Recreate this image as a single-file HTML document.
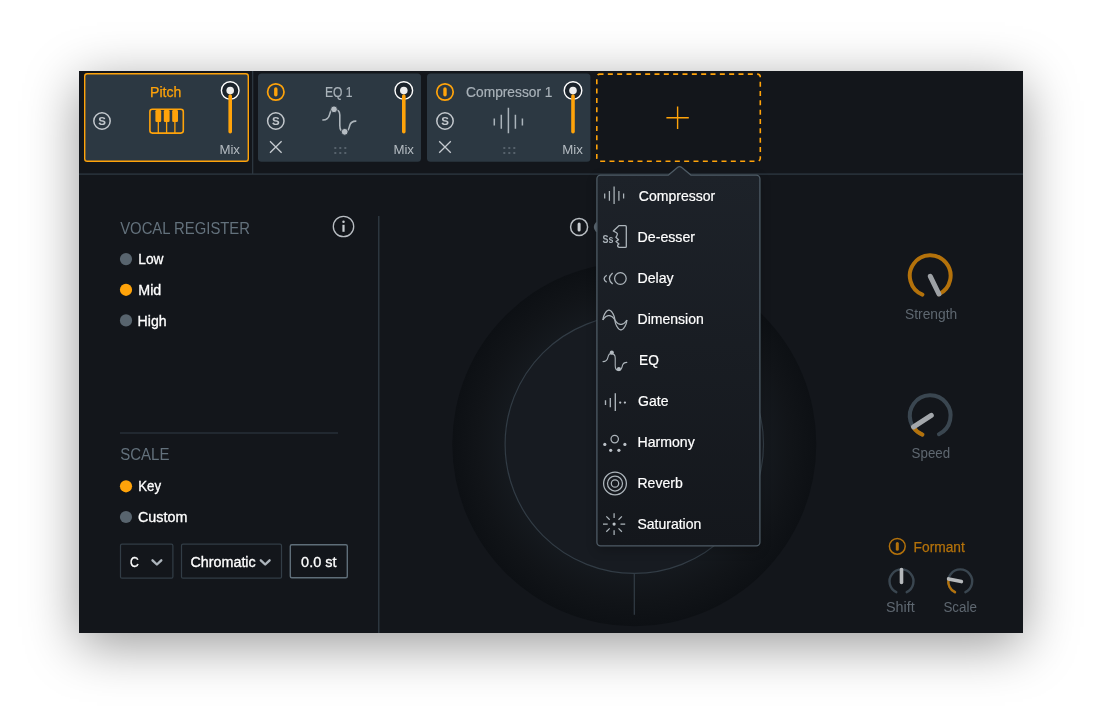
<!DOCTYPE html>
<html lang="en">
<head>
<meta charset="utf-8">
<title>Pitch module – add effect menu</title>
<style>
  html, body { margin: 0; padding: 0; background: #ffffff; }
  body { width: 1104px; height: 710px; overflow: hidden; position: relative;
         font-family: "Liberation Sans", sans-serif; }
  #win { position: absolute; left: 79px; top: 71px; width: 944px; height: 562px;
         background: #13161b;
         box-shadow: 0 12px 50px rgba(0,0,0,0.40), 0 0 0 0.6px rgba(255,255,255,0.55); }
  svg#ui { position: absolute; left: 0; top: 0; width: 1104px; height: 710px; will-change: transform; }
  svg text { font-family: "Liberation Sans", sans-serif; }
</style>
</head>
<body>
<div id="win"></div>
<svg id="ui" width="1104" height="710" viewBox="0 0 1104 710">
  <defs>
    <radialGradient id="gOuter" cx="634.3" cy="444.2" r="182" gradientUnits="userSpaceOnUse">
      <stop offset="0" stop-color="#15191e"/>
      <stop offset="0.71" stop-color="#15191e"/>
      <stop offset="0.86" stop-color="#111418"/>
      <stop offset="1" stop-color="#0d1014"/>
    </radialGradient>
    <linearGradient id="gPop" x1="0" y1="175" x2="0" y2="546" gradientUnits="userSpaceOnUse">
      <stop offset="0" stop-color="#1d2229"/>
      <stop offset="1" stop-color="#14171c"/>
    </linearGradient>
    <filter id="fBlur" x="-20%" y="-20%" width="140%" height="140%"><feGaussianBlur stdDeviation="6"/></filter>
    <clipPath id="clipWin"><rect x="79" y="71" width="944" height="562"/></clipPath>
  </defs>

  <!-- ===== separators ===== -->
  <g id="separators" fill="#2c363f">
    <rect x="79" y="173.4" width="944" height="1.4"/>
    <rect x="252" y="71" width="1.3" height="103"/>
    <rect x="378" y="216" width="1.5" height="417"/>
    <rect x="120" y="432.4" width="218" height="1.2"/>
  </g>

  <!-- ===== big dial ===== -->
  <g id="dial" clip-path="url(#clipWin)">
    <circle cx="634.3" cy="444.2" r="182" fill="url(#gOuter)"/>
    <circle cx="634.3" cy="444.2" r="129.2" fill="#171b21" stroke="#323c45" stroke-width="1.2"/>
    <rect x="633.7" y="573.6" width="1.2" height="41.2" fill="#323c45"/>
  </g>

  <!-- ===== module: Pitch ===== -->
  <g id="mod-pitch">
    <rect x="84.7" y="73.7" width="163.6" height="87.6" rx="2.6" fill="#2c3842" stroke="#ffa30a" stroke-width="1.4"/>
    <text x="150.1" y="97.3" font-size="14" fill="#ffa30a" stroke="#ffa30a" stroke-width="0.25" textLength="31.3" lengthAdjust="spacingAndGlyphs">Pitch</text>
    <!-- solo -->
    <circle cx="102" cy="121" r="8.2" fill="none" stroke="#c3c8cd" stroke-width="1.5"/>
    <text x="102" y="125.1" font-size="11.5" font-weight="bold" fill="#c3c8cd" text-anchor="middle">S</text>
    <!-- piano -->
    <g stroke="#ffa30a" fill="none" stroke-width="1.6">
      <rect x="149.9" y="109.3" width="33.4" height="23.8" rx="2.5"/>
      <path d="M158.3 120v13M166.6 120v13M174.9 120v13" stroke-width="1.3"/>
    </g>
    <g fill="#ffa30a">
      <rect x="155.4" y="110" width="5.8" height="12" rx="1.2"/>
      <rect x="163.8" y="110" width="5.8" height="12" rx="1.2"/>
      <rect x="172.2" y="110" width="5.8" height="12" rx="1.2"/>
    </g>
    <!-- mix slider -->
    <circle cx="230.2" cy="90.5" r="8.8" fill="#1b232b" stroke="#ffffff" stroke-width="1.4"/>
    <path d="M230.2 96V131.8" stroke="#ffa30a" stroke-width="3.6" stroke-linecap="round"/>
    <circle cx="230.2" cy="90.5" r="3.8" fill="#ececec"/>
    <text x="219.4" y="153.6" font-size="13" fill="#b4bbc1" textLength="20.6" lengthAdjust="spacingAndGlyphs">Mix</text>
  </g>

  <!-- ===== module: EQ 1 ===== -->
  <g id="mod-eq">
    <rect x="258" y="73.4" width="163" height="88.4" rx="3.5" fill="#2c3842"/>
    <!-- power -->
    <circle cx="275.8" cy="92" r="8.2" fill="none" stroke="#ffa30a" stroke-width="1.7"/>
    <path d="M275.8 88.9V94.7" stroke="#ffa30a" stroke-width="3.4" stroke-linecap="round"/>
    <!-- solo -->
    <circle cx="275.8" cy="121" r="8.2" fill="none" stroke="#c3c8cd" stroke-width="1.5"/>
    <text x="275.8" y="125.1" font-size="11.5" font-weight="bold" fill="#c3c8cd" text-anchor="middle">S</text>
    <!-- remove -->
    <path d="M270 141.2L281.6 152.8M281.6 141.2L270 152.8" stroke="#c6cbd0" stroke-width="1.3" fill="none"/>
    <text x="325" y="97.3" font-size="14" fill="#a9b2b9" stroke="#a9b2b9" stroke-width="0.2" textLength="27.6" lengthAdjust="spacingAndGlyphs">EQ 1</text>
    <!-- eq icon -->
    <path d="M322.9 120C326.6 120 328.6 118.6 329.6 114.6L330.4 112C330.9 110.3 332.2 109.3 334 109.3C337.8 109.3 339.8 110.8 339.8 115V125.5C339.8 129.5 341.2 131.8 344.7 131.8C347.2 131.8 348.5 130 349.2 127.4L349.8 125.2C350.8 122 352.6 121.1 355.8 121.1" fill="none" stroke="#aeb6bc" stroke-width="1.6" stroke-linecap="round"/>
    <circle cx="334" cy="109.3" r="3.4" fill="#b5bcc2" stroke="#2c3842" stroke-width="0.9"/>
    <circle cx="344.7" cy="131.8" r="3.4" fill="#b5bcc2" stroke="#2c3842" stroke-width="0.9"/>
    <!-- drag dots -->
    <g fill="#56626c">
      <rect x="334.3" y="147" width="2" height="2"/><rect x="339.3" y="147" width="2" height="2"/><rect x="344.3" y="147" width="2" height="2"/>
      <rect x="334.3" y="152" width="2" height="2"/><rect x="339.3" y="152" width="2" height="2"/><rect x="344.3" y="152" width="2" height="2"/>
    </g>
    <!-- mix slider -->
    <circle cx="403.8" cy="90.5" r="8.8" fill="#1b232b" stroke="#ffffff" stroke-width="1.4"/>
    <path d="M403.8 96V131.8" stroke="#ffa30a" stroke-width="3.6" stroke-linecap="round"/>
    <circle cx="403.8" cy="90.5" r="3.8" fill="#ececec"/>
    <text x="393.4" y="153.6" font-size="13" fill="#b4bbc1" textLength="20.6" lengthAdjust="spacingAndGlyphs">Mix</text>
  </g>

  <!-- ===== module: Compressor 1 ===== -->
  <g id="mod-comp">
    <rect x="427" y="73.4" width="163.4" height="88.4" rx="3.5" fill="#2c3842"/>
    <circle cx="445" cy="92" r="8.2" fill="none" stroke="#ffa30a" stroke-width="1.7"/>
    <path d="M445 88.9V94.7" stroke="#ffa30a" stroke-width="3.4" stroke-linecap="round"/>
    <circle cx="445" cy="121" r="8.2" fill="none" stroke="#c3c8cd" stroke-width="1.5"/>
    <text x="445" y="125.1" font-size="11.5" font-weight="bold" fill="#c3c8cd" text-anchor="middle">S</text>
    <path d="M439.2 141.2L450.8 152.8M450.8 141.2L439.2 152.8" stroke="#c6cbd0" stroke-width="1.3" fill="none"/>
    <text x="466.1" y="97.3" font-size="14" fill="#a9b2b9" stroke="#a9b2b9" stroke-width="0.2" textLength="86.4" lengthAdjust="spacingAndGlyphs">Compressor 1</text>
    <!-- comp icon -->
    <path d="M494.3 118.6V125.4M501.3 114.8V128.8M508.4 107.8V133.3M515.4 114.8V128.8M522.4 118.6V125.4" stroke="#aab3ba" stroke-width="1.5" fill="none"/>
    <g fill="#56626c">
      <rect x="503.3" y="147" width="2" height="2"/><rect x="508.3" y="147" width="2" height="2"/><rect x="513.3" y="147" width="2" height="2"/>
      <rect x="503.3" y="152" width="2" height="2"/><rect x="508.3" y="152" width="2" height="2"/><rect x="513.3" y="152" width="2" height="2"/>
    </g>
    <circle cx="573" cy="90.5" r="8.8" fill="#1b232b" stroke="#ffffff" stroke-width="1.4"/>
    <path d="M573 96V131.8" stroke="#ffa30a" stroke-width="3.6" stroke-linecap="round"/>
    <circle cx="573" cy="90.5" r="3.8" fill="#ececec"/>
    <text x="562.2" y="153.6" font-size="13" fill="#b4bbc1" textLength="20.6" lengthAdjust="spacingAndGlyphs">Mix</text>
  </g>

  <!-- ===== add module slot ===== -->
  <g id="add-slot">
    <rect x="596.8" y="74.1" width="163.5" height="87.2" rx="3" fill="none" stroke="#ffa30a" stroke-width="1.6" stroke-dasharray="5 4.333" stroke-dashoffset="1.3"/>
    <path d="M666.4 117.8H688.8M677.6 106.6V129" stroke="#ffa30a" stroke-width="1.4" fill="none"/>
  </g>

  <!-- ===== left panel ===== -->
  <g id="left-panel">
    <text x="120.2" y="233.5" font-size="16" fill="#63717c" textLength="129.8" lengthAdjust="spacingAndGlyphs">VOCAL REGISTER</text>
    <circle cx="343.5" cy="226.5" r="10.2" fill="none" stroke="#b9bec3" stroke-width="1.3"/>
    <circle cx="343.5" cy="221.8" r="1.25" fill="#c9cdd1"/>
    <path d="M343.5 224.8V231.8" stroke="#c9cdd1" stroke-width="2.2" stroke-linecap="butt"/>

    <circle cx="126" cy="259.1" r="6.1" fill="#58646e"/>
    <text x="138.3" y="264.4" font-size="14" fill="#ffffff" stroke="#ffffff" stroke-width="0.3" textLength="25.2" lengthAdjust="spacingAndGlyphs">Low</text>
    <circle cx="126" cy="289.8" r="6.1" fill="#ffa30a"/>
    <text x="138.3" y="295.1" font-size="14" fill="#ffffff" stroke="#ffffff" stroke-width="0.3" textLength="23" lengthAdjust="spacingAndGlyphs">Mid</text>
    <circle cx="126" cy="320.4" r="6.1" fill="#58646e"/>
    <text x="137.6" y="325.7" font-size="14" fill="#ffffff" stroke="#ffffff" stroke-width="0.3" textLength="29" lengthAdjust="spacingAndGlyphs">High</text>

    <text x="120.2" y="460.2" font-size="16" fill="#63717c" textLength="49.2" lengthAdjust="spacingAndGlyphs">SCALE</text>
    <circle cx="126" cy="486.3" r="6.1" fill="#ffa30a"/>
    <text x="138.3" y="491.4" font-size="14" fill="#ffffff" stroke="#ffffff" stroke-width="0.3" textLength="22.8" lengthAdjust="spacingAndGlyphs">Key</text>
    <circle cx="126" cy="517" r="6.1" fill="#58646e"/>
    <text x="138" y="522.1" font-size="14" fill="#ffffff" stroke="#ffffff" stroke-width="0.3" textLength="49.4" lengthAdjust="spacingAndGlyphs">Custom</text>

    <rect x="120.5" y="544.2" width="52.4" height="34" rx="1.5" fill="none" stroke="#323d46" stroke-width="1.2"/>
    <text x="130" y="566.6" font-size="14" fill="#ffffff" stroke="#ffffff" stroke-width="0.3" textLength="8.8" lengthAdjust="spacingAndGlyphs">C</text>
    <path d="M152.5 560.3L156.9 564.5L161.3 560.3" fill="none" stroke="#adb5bc" stroke-width="2.4" stroke-linecap="round" stroke-linejoin="round"/>

    <rect x="181.5" y="544.2" width="100" height="34" rx="1.5" fill="none" stroke="#323d46" stroke-width="1.2"/>
    <text x="190.5" y="566.6" font-size="14" fill="#ffffff" stroke="#ffffff" stroke-width="0.3" textLength="65.2" lengthAdjust="spacingAndGlyphs">Chromatic</text>
    <path d="M260.8 560.3L265.2 564.5L269.6 560.3" fill="none" stroke="#adb5bc" stroke-width="2.4" stroke-linecap="round" stroke-linejoin="round"/>

    <rect x="290.3" y="544.8" width="57" height="33" rx="1.5" fill="none" stroke="#5f6e79" stroke-width="1.4"/>
    <text x="301.1" y="566.6" font-size="14" fill="#ffffff" stroke="#ffffff" stroke-width="0.3" textLength="35.4" lengthAdjust="spacingAndGlyphs">0.0 st</text>
  </g>

  <!-- ===== center header (partly hidden by menu) ===== -->
  <g id="center-head">
    <circle cx="579.1" cy="226.9" r="8.5" fill="none" stroke="#b9bec3" stroke-width="1.5"/>
    <path d="M579.1 223.9V229.9" stroke="#c9cdd1" stroke-width="3" stroke-linecap="round"/>
    <circle cx="599.8" cy="227" r="6" fill="#5c6872"/>
  </g>

  <!-- ===== right knobs ===== -->
  <g id="knobs" fill="none" stroke-linecap="round">
    <!-- Strength -->
    <path d="M922.4 294.6A20.4 20.4 0 1 1 938.9 294.2" stroke="#b4720b" stroke-width="4"/>
    <path d="M930.3 276.3L938.9 294" stroke="#9da1a5" stroke-width="5"/>
    <!-- Speed -->
    <path d="M922.4 434.6A20.4 20.4 0 1 1 938.9 434.2" stroke="#3a4650" stroke-width="4"/>
    <path d="M922.4 434.6A20.4 20.4 0 0 1 913.2 427.1" stroke="#b4720b" stroke-width="4"/>
    <path d="M931.3 415.3L913.6 426.9" stroke="#a3a7ab" stroke-width="5"/>
    <!-- Shift -->
    <path d="M896.3 592.2A12 12 0 1 1 906.7 592.2" stroke="#3a4650" stroke-width="2.4"/>
    <path d="M901.5 569.6V582.4" stroke="#b6b9bc" stroke-width="3.6"/>
    <!-- Scale -->
    <path d="M955 592.2A12 12 0 1 1 965.4 592.2" stroke="#3a4650" stroke-width="2.4"/>
    <path d="M955 592.2A12 12 0 0 1 948.5 578.9" stroke="#b4720b" stroke-width="2.4"/>
    <path d="M948.6 578.9L961.4 581.6" stroke="#b6b9bc" stroke-width="3.6"/>
    <!-- Formant power -->
    <circle cx="897.3" cy="546.3" r="7.9" stroke="#b4720b" stroke-width="1.5"/>
    <path d="M897.3 543.5V549.2" stroke="#b4720b" stroke-width="3"/>
  </g>
  <g id="knob-labels">
    <text x="905" y="318.6" font-size="14" fill="#5e6770" textLength="52.2" lengthAdjust="spacingAndGlyphs">Strength</text>
    <text x="911.6" y="458.3" font-size="14" fill="#5e6770" textLength="38.5" lengthAdjust="spacingAndGlyphs">Speed</text>
    <text x="913.6" y="552.4" font-size="14" fill="#b4720b" stroke="#b4720b" stroke-width="0.25" textLength="51.2" lengthAdjust="spacingAndGlyphs">Formant</text>
    <text x="886" y="611.9" font-size="14" fill="#5e6770" textLength="28.8" lengthAdjust="spacingAndGlyphs">Shift</text>
    <text x="943.4" y="611.9" font-size="14" fill="#5e6770" textLength="33.5" lengthAdjust="spacingAndGlyphs">Scale</text>
  </g>

  <!-- ===== add-module popup menu ===== -->
  <g id="popup">
    <rect x="597" y="178" width="163" height="372" rx="4" fill="#000000" opacity="0.22" filter="url(#fBlur)"/>
    <path d="M600.6 175.1H668.5L677.4 167.6Q679.6 165.6 681.8 167.6L690.8 175.1H756.2a3.7 3.7 0 0 1 3.7 3.7V542.2a3.7 3.7 0 0 1 -3.7 3.7H600.6a3.7 3.7 0 0 1 -3.7 -3.7V178.8a3.7 3.7 0 0 1 3.7 -3.7Z" fill="url(#gPop)" stroke="#4e5b65" stroke-width="1.3" stroke-linejoin="round"/>
    <g id="menu-icons" fill="none" stroke="#adb5bb" stroke-width="1.25">
      <!-- compressor -->
      <path d="M604.7 193.4V198.4M609.4 190.9V200.8M614.1 186.6V204M618.9 190.9V200.8M623.6 193.4V198.4"/>
      <!-- de-esser face -->
      <path d="M625.3 225.7H618.9L613.3 231L616.6 232.8C617.6 233.5 617.6 234.5 617 235.5L615.9 237.3L618.5 239.8L616 241.6L619 243.9L617.6 245.3C617.6 246.6 618.4 247.4 619.4 247.4H625.3C626 247.4 626.3 247 626.3 246.4V226.7C626.3 226.1 626 225.7 625.3 225.7Z" stroke-width="1.3" stroke-linejoin="round"/>
      <!-- delay -->
      <circle cx="620.4" cy="278.5" r="5.8"/>
      <path stroke-width="1.3" d="M612.6 272.9Q606.2 278.5 612.6 284.1M606.7 275.3Q601.5 278.8 606.7 282.3"/>
      <!-- dimension -->
      <path stroke-width="1.25" stroke-linejoin="round" d="M602.9 320.0L603.3 317.6L603.7 316.3L604.1 315.3L604.5 314.4L604.9 313.6L605.3 313.0L605.7 312.4L606.1 311.8L606.5 311.4L606.9 311.0L607.3 310.7L607.7 310.5L608.1 310.3L608.5 310.2L608.9 310.2L609.3 310.2L609.7 310.3L610.1 310.5L610.5 310.7L610.9 311.0L611.3 311.4L611.7 311.8L612.1 312.4L612.5 313.0L612.9 313.6L613.3 314.4L613.7 315.3L614.1 316.3L614.5 317.6L614.9 320.0L615.3 322.4L615.7 323.7L616.1 324.7L616.5 325.6L616.9 326.4L617.3 327.0L617.7 327.6L618.1 328.2L618.5 328.6L618.9 329.0L619.3 329.3L619.7 329.5L620.1 329.7L620.5 329.8L620.9 329.8L621.3 329.8L621.7 329.7L622.1 329.5L622.5 329.3L622.9 329.0L623.3 328.6L623.7 328.2L624.1 327.6L624.5 327.0L624.9 326.4L625.3 325.6L625.7 324.7L626.1 323.7L626.5 322.4L626.9 320.0"/>
      <path stroke-width="1.25" stroke-linejoin="round" d="M602.9 320.0L603.3 319.3L603.7 318.7L604.1 318.3L604.5 317.9L604.9 317.5L605.3 317.1L605.7 316.8L606.1 316.5L606.5 316.3L606.9 316.1L607.3 315.9L607.7 315.8L608.1 315.7L608.5 315.6L608.9 315.6L609.3 315.6L609.7 315.7L610.1 315.8L610.5 315.9L610.9 316.1L611.3 316.3L611.7 316.5L612.1 316.8L612.5 317.1L612.9 317.5L613.3 317.9L613.7 318.3L614.1 318.7L614.5 319.3L614.9 320.0L615.3 320.7L615.7 321.3L616.1 321.7L616.5 322.1L616.9 322.5L617.3 322.9L617.7 323.2L618.1 323.5L618.5 323.7L618.9 323.9L619.3 324.1L619.7 324.2L620.1 324.3L620.5 324.4L620.9 324.4L621.3 324.4L621.7 324.3L622.1 324.2L622.5 324.1L622.9 323.9L623.3 323.7L623.7 323.5L624.1 323.2L624.5 322.9L624.9 322.5L625.3 322.1L625.7 321.7L626.1 321.3L626.5 320.7L626.9 320.0"/>
      <!-- eq -->
      <path transform="translate(603 361.6) scale(0.723 0.742) translate(-322.9 -120)" stroke-width="1.5" stroke-linecap="round" d="M322.9 120C326.6 120 328.6 118.6 329.6 114.6L330.4 112C330.9 110.3 332.2 109.3 334 109.3C337.8 109.3 339.8 110.8 339.8 115V125.5C339.8 129.5 341.2 131.8 344.7 131.8C347.2 131.8 348.5 130 349.2 127.4L349.8 125.2C350.8 122 352.6 121.1 355.8 121.1"/>
      <!-- gate -->
      <path stroke-width="1.35" d="M605.5 400.3V405.1M610.3 398.1V407.3M615.3 393.3V410.9"/>
      <!-- harmony -->
      <circle cx="614.7" cy="439.1" r="3.7"/>
      <!-- reverb -->
      <circle cx="615" cy="483.5" r="11.4"/>
      <circle cx="615" cy="483.5" r="7.5"/>
      <circle cx="615" cy="483.5" r="3.7"/>
      <!-- saturation -->
      <path d="M614.1 513.2V518M614.1 530.2V535M603 524.1H607.7M620.5 524.1H625.2M606.3 516.4L609.7 519.8M618.5 528.4L621.9 531.8M621.9 516.4L618.5 519.8M609.7 528.4L606.3 531.8"/>
    </g>
    <g id="menu-dots" fill="#bcc2c8">
      <circle cx="611.8" cy="352.6" r="2.05" fill="#b5bcc2"/><circle cx="618.9" cy="369.1" r="2.05" fill="#b5bcc2"/>
      <circle cx="620.2" cy="402.6" r="1.15"/><circle cx="624.9" cy="402.6" r="1.15"/>
      <circle cx="604.8" cy="444.4" r="1.6"/><circle cx="624.9" cy="444.4" r="1.6"/>
      <circle cx="610.7" cy="450.3" r="1.6"/><circle cx="618.9" cy="450.3" r="1.6"/>
      <circle cx="614.1" cy="524.1" r="1.6"/>
    </g>
    <text x="602.6" y="243.4" font-size="10.2" font-weight="bold" fill="#aab2b9" textLength="10.9" lengthAdjust="spacingAndGlyphs">Ss</text>
    <g id="menu-labels" font-size="14.5" fill="#ffffff" stroke="#ffffff" stroke-width="0.2">
      <text x="638.8" y="200.8" textLength="76.4" lengthAdjust="spacingAndGlyphs">Compressor</text>
      <text x="637.5" y="241.9" textLength="57.6" lengthAdjust="spacingAndGlyphs">De-esser</text>
      <text x="637.5" y="282.9" textLength="36.2" lengthAdjust="spacingAndGlyphs">Delay</text>
      <text x="637.5" y="324.1" textLength="66.3" lengthAdjust="spacingAndGlyphs">Dimension</text>
      <text x="639.0" y="365.3" textLength="19.8" lengthAdjust="spacingAndGlyphs">EQ</text>
      <text x="638.1" y="406.1" textLength="30.4" lengthAdjust="spacingAndGlyphs">Gate</text>
      <text x="637.5" y="447.1" textLength="57.2" lengthAdjust="spacingAndGlyphs">Harmony</text>
      <text x="637.5" y="488.3" textLength="45.2" lengthAdjust="spacingAndGlyphs">Reverb</text>
      <text x="637.5" y="529.3" textLength="63.8" lengthAdjust="spacingAndGlyphs">Saturation</text>
    </g>
  </g>
</svg>
</body>
</html>
